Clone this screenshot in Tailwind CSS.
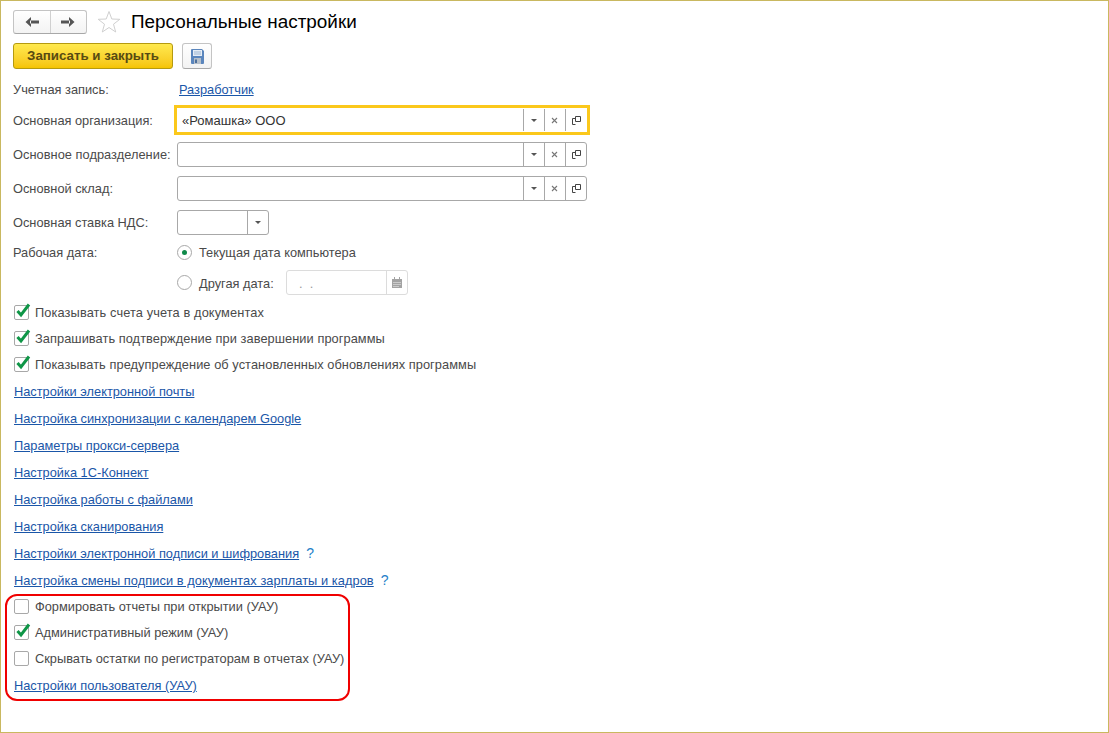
<!DOCTYPE html>
<html lang="ru">
  <head>
    <meta charset="UTF-8" />
    <title>Персональные настройки</title>
    <script src="https://cdn.jsdelivr.net/npm/@tailwindcss/browser@4"></script>
  </head>
  <body class="bg-white">
    <div class="relative w-[1109px] h-[733px] overflow-hidden border border-[#c9b860] pl-[12px] pt-[8px] font-['Liberation_Sans',Arial,sans-serif] text-[12.8px] text-[#4a4a4a]">
      <!-- header -->
      <div class="flex items-center h-[25px]">
        <div class="flex w-[74px] h-[24px] rounded-[3px] border border-[#c4c4c4] border-b-[#a8a8a8] bg-gradient-to-b from-white to-[#f3f3f3]">
          <div class="flex-1 flex items-center justify-center border-r border-[#d0d0d0]">
            <svg width="14" height="10" viewBox="0 0 14 10"><path d="M6 0 L0.5 5 L6 10 Z M5 3.4 H14 V6.6 H5 Z" fill="#555"/></svg>
          </div>
          <div class="flex-1 flex items-center justify-center">
            <svg width="14" height="10" viewBox="0 0 14 10"><path d="M8 0 L13.5 5 L8 10 Z M9 3.4 H0 V6.6 H9 Z" fill="#555"/></svg>
          </div>
        </div>
        <svg class="ml-[10px]" width="24" height="24" viewBox="0 0 24 24"><path d="M12 1.5 L14.8 9 L22.8 9.3 L16.5 14.2 L18.7 22 L12 17.5 L5.3 22 L7.5 14.2 L1.2 9.3 L9.2 9 Z" fill="none" stroke="#d0d0d0" stroke-width="1"/></svg>
        <h1 class="ml-[10px] text-[18.9px] leading-[25px] text-black">Персональные настройки</h1>
      </div>
      <!-- command bar -->
      <div class="flex mt-[9px] h-[27px]">
        <div class="flex items-center justify-center w-[160px] h-[26px] rounded-[3px] border border-[#b59a10] bg-gradient-to-b from-[#ffe94d] to-[#f5c400] font-bold text-[13.3px] text-[#574b12]">Записать и закрыть</div>
        <div class="flex items-center justify-center ml-[9px] w-[30px] h-[26px] rounded-[3px] border border-[#c4c4c4] border-b-[#a8a8a8] bg-gradient-to-b from-white to-[#f3f3f3]">
          <svg width="13" height="15" viewBox="0 0 13 15"><path d="M0 1 Q0 0 1 0 H11 L13 2 V14 Q13 15 12 15 H1 Q0 15 0 14 Z" fill="#5b86bd"/><rect x="2" y="1" width="9" height="6" fill="#e6edf5"/><path d="M3 3 H10 M3 5 H10" stroke="#9db6d3"/><rect x="3" y="9" width="7" height="6" fill="#b7c0ca"/><rect x="4" y="10.5" width="2" height="3.5" fill="#4c6f9c"/></svg>
        </div>
      </div>
      <!-- form -->
      <div class="flex items-center h-[20px] mt-[9px]">
        <span class="w-[166px] pt-[2px]">Учетная запись:</span>
        <a class="pt-[2px] underline text-[#1a56a8]">Разработчик</a>
      </div>
      <div class="flex items-center h-[30px] mt-[6px]">
        <span class="w-[161px] pt-[2px]">Основная организация:</span>
        <div class="flex w-[416px] h-[30px] border-[3px] border-[#fbc81b] bg-white">
          <span class="flex-1 pl-[5px] pt-[1px] leading-[24px] text-[13px] text-[#333]">«Ромашка» ООО</span>
          <div class="flex items-center justify-center w-[21px] my-[1px] border-l border-[#a8a8a8]"><svg width="6" height="3" viewBox="0 0 6 3"><path d="M0 0 H6 L3 3 Z" fill="#555"/></svg></div>
          <div class="flex items-center justify-center w-[21px] my-[1px] border-l border-[#a8a8a8]"><svg class="mr-[2px]" width="7" height="7" viewBox="0 0 7 7"><path d="M1 1 L6 6 M6 1 L1 6" stroke="#777" stroke-width="1.1"/></svg></div>
          <div class="flex items-center justify-center w-[22px] my-[1px] border-l border-[#a8a8a8]"><svg width="9" height="9" viewBox="0 0 9 9"><path d="M3.5 0.5 H8.5 V5.5 H3.5 Z M3 2.5 H0.5 V8.5 H3.5" fill="none" stroke="#444"/></svg></div>
        </div>
      </div>
      <div class="flex items-center h-[25px] mt-[7px]">
        <span class="w-[164px] tracking-[0.04px]">Основное подразделение:</span>
        <div class="flex w-[410px] h-[25px] rounded-[3px] border border-[#a8a8a8] bg-white">
          <span class="flex-1"></span>
          <div class="flex items-center justify-center w-[21px] border-l border-[#a8a8a8]"><svg width="6" height="3" viewBox="0 0 6 3"><path d="M0 0 H6 L3 3 Z" fill="#555"/></svg></div>
          <div class="flex items-center justify-center w-[21px] border-l border-[#a8a8a8]"><svg class="mr-[2px]" width="7" height="7" viewBox="0 0 7 7"><path d="M1 1 L6 6 M6 1 L1 6" stroke="#777" stroke-width="1.1"/></svg></div>
          <div class="flex items-center justify-center w-[21px] border-l border-[#a8a8a8]"><svg width="9" height="9" viewBox="0 0 9 9"><path d="M3.5 0.5 H8.5 V5.5 H3.5 Z M3 2.5 H0.5 V8.5 H3.5" fill="none" stroke="#444"/></svg></div>
        </div>
      </div>
      <div class="flex items-center h-[25px] mt-[9px]">
        <span class="w-[164px]">Основной склад:</span>
        <div class="flex w-[410px] h-[25px] rounded-[3px] border border-[#a8a8a8] bg-white">
          <span class="flex-1"></span>
          <div class="flex items-center justify-center w-[21px] border-l border-[#a8a8a8]"><svg width="6" height="3" viewBox="0 0 6 3"><path d="M0 0 H6 L3 3 Z" fill="#555"/></svg></div>
          <div class="flex items-center justify-center w-[21px] border-l border-[#a8a8a8]"><svg class="mr-[2px]" width="7" height="7" viewBox="0 0 7 7"><path d="M1 1 L6 6 M6 1 L1 6" stroke="#777" stroke-width="1.1"/></svg></div>
          <div class="flex items-center justify-center w-[21px] border-l border-[#a8a8a8]"><svg width="9" height="9" viewBox="0 0 9 9"><path d="M3.5 0.5 H8.5 V5.5 H3.5 Z M3 2.5 H0.5 V8.5 H3.5" fill="none" stroke="#444"/></svg></div>
        </div>
      </div>
      <div class="flex items-center h-[25px] mt-[9px]">
        <span class="w-[164px]">Основная ставка НДС:</span>
        <div class="flex w-[92px] h-[25px] rounded-[3px] border border-[#a8a8a8] bg-white">
          <span class="flex-1"></span>
          <div class="flex items-center justify-center w-[21px] border-l border-[#a8a8a8]"><svg width="6" height="3" viewBox="0 0 6 3"><path d="M0 0 H6 L3 3 Z" fill="#555"/></svg></div>
        </div>
      </div>
      <div class="flex items-center h-[20px] mt-[7px]">
        <span class="w-[164px] pt-[2px]">Рабочая дата:</span>
        <div class="flex items-center justify-center w-[15px] h-[15px] rounded-full border border-[#a8a8a8]"><div class="w-[5px] h-[5px] rounded-full bg-[#0f8a4a]"></div></div>
        <span class="ml-[7px] pt-[2px]">Текущая дата компьютера</span>
      </div>
      <div class="flex items-center h-[25px] mt-[8px]">
        <div class="w-[164px]"></div>
        <div class="w-[15px] h-[15px] rounded-full border border-[#a8a8a8]"></div>
        <span class="ml-[7px] w-[87px] pt-[2px]">Другая дата:</span>
        <div class="flex w-[122px] h-[25px] rounded-[3px] border border-[#dcdcdc] bg-white">
          <span class="flex-1 pl-[12px] leading-[25px] text-[#9a9a9a]">.&nbsp;&nbsp;.</span>
          <div class="flex items-center justify-center w-[21px] border-l border-[#dcdcdc]"><svg width="10" height="11" viewBox="0 0 10 11"><path d="M0 2 H2 V0 H3 V2 H7 V0 H8 V2 H10 V11 H0 Z" fill="#a3a3a3"/><path d="M1.5 5.5 H8.5 M1.5 7.5 H8.5 M1.5 9.5 H6.5" stroke="#f2f2f2" stroke-dasharray="1 1"/></svg></div>
        </div>
      </div>
      <!-- checkboxes -->
      <div class="flex items-center h-[26px] mt-[4px]">
        <div class="relative w-[15px] h-[15px] ml-px rounded-[2px] border border-[#a8a8a8]"><svg class="absolute left-0 top-[-4px]" width="17" height="17" viewBox="0 0 17 17"><path d="M2.5 9 L6 13 L14 2.5" fill="none" stroke="#0f9647" stroke-width="3"/></svg></div>
        <span class="ml-[6px] pt-[2px] tracking-[0.11px]">Показывать счета учета в документах</span>
      </div>
      <div class="flex items-center h-[26px]">
        <div class="relative w-[15px] h-[15px] ml-px rounded-[2px] border border-[#a8a8a8]"><svg class="absolute left-0 top-[-4px]" width="17" height="17" viewBox="0 0 17 17"><path d="M2.5 9 L6 13 L14 2.5" fill="none" stroke="#0f9647" stroke-width="3"/></svg></div>
        <span class="ml-[6px] pt-[2px] tracking-[0.06px]">Запрашивать подтверждение при завершении программы</span>
      </div>
      <div class="flex items-center h-[26px]">
        <div class="relative w-[15px] h-[15px] ml-px rounded-[2px] border border-[#a8a8a8]"><svg class="absolute left-0 top-[-4px]" width="17" height="17" viewBox="0 0 17 17"><path d="M2.5 9 L6 13 L14 2.5" fill="none" stroke="#0f9647" stroke-width="3"/></svg></div>
        <span class="ml-[6px] pt-[2px] tracking-[0.06px]">Показывать предупреждение об установленных обновлениях программы</span>
      </div>
      <!-- links -->
      <div class="flex flex-col ml-px text-[#1a56a8]">
        <div class="flex items-center h-[27px] pt-[2px]"><a class="underline">Настройки электронной почты</a></div>
        <div class="flex items-center h-[27px] pt-[2px]"><a class="underline">Настройка синхронизации с календарем Google</a></div>
        <div class="flex items-center h-[27px] pt-[2px]"><a class="underline">Параметры прокси-сервера</a></div>
        <div class="flex items-center h-[27px] pt-[2px]"><a class="underline">Настройка 1С-Коннект</a></div>
        <div class="flex items-center h-[27px] pt-[2px]"><a class="underline">Настройка работы с файлами</a></div>
        <div class="flex items-center h-[27px] pt-[2px]"><a class="underline">Настройка сканирования</a></div>
        <div class="flex items-center h-[27px] pt-[2px]"><a class="underline">Настройки электронной подписи и шифрования</a><span class="ml-[7px] text-[#2481c9] text-[14px]">?</span></div>
        <div class="flex items-center h-[27px] pt-[2px]"><a class="underline tracking-[0.07px]">Настройка смены подписи в документах зарплаты и кадров</a><span class="ml-[7px] text-[#2481c9] text-[14px]">?</span></div>
      </div>
      <!-- bottom group -->
      <div class="flex items-center h-[26px]">
        <div class="w-[15px] h-[15px] ml-px rounded-[2px] border border-[#a8a8a8]"></div>
        <span class="ml-[6px] pt-[2px]">Формировать отчеты при открытии (УАУ)</span>
      </div>
      <div class="flex items-center h-[26px]">
        <div class="relative w-[15px] h-[15px] ml-px rounded-[2px] border border-[#a8a8a8]"><svg class="absolute left-0 top-[-4px]" width="17" height="17" viewBox="0 0 17 17"><path d="M2.5 9 L6 13 L14 2.5" fill="none" stroke="#0f9647" stroke-width="3"/></svg></div>
        <span class="ml-[6px] pt-[2px]">Административный режим (УАУ)</span>
      </div>
      <div class="flex items-center h-[26px]">
        <div class="w-[15px] h-[15px] ml-px rounded-[2px] border border-[#a8a8a8]"></div>
        <span class="ml-[6px] pt-[2px]">Скрывать остатки по регистраторам в отчетах (УАУ)</span>
      </div>
      <div class="flex items-center h-[27px] pt-[2px] ml-px text-[#1a56a8]"><a class="underline">Настройки пользователя (УАУ)</a></div>
      <!-- red annotation -->
      <div class="absolute left-[4px] top-[593px] w-[345px] h-[107px] rounded-[12px] border-2 border-[#f00000]"></div>
    </div>
  </body>
</html>
